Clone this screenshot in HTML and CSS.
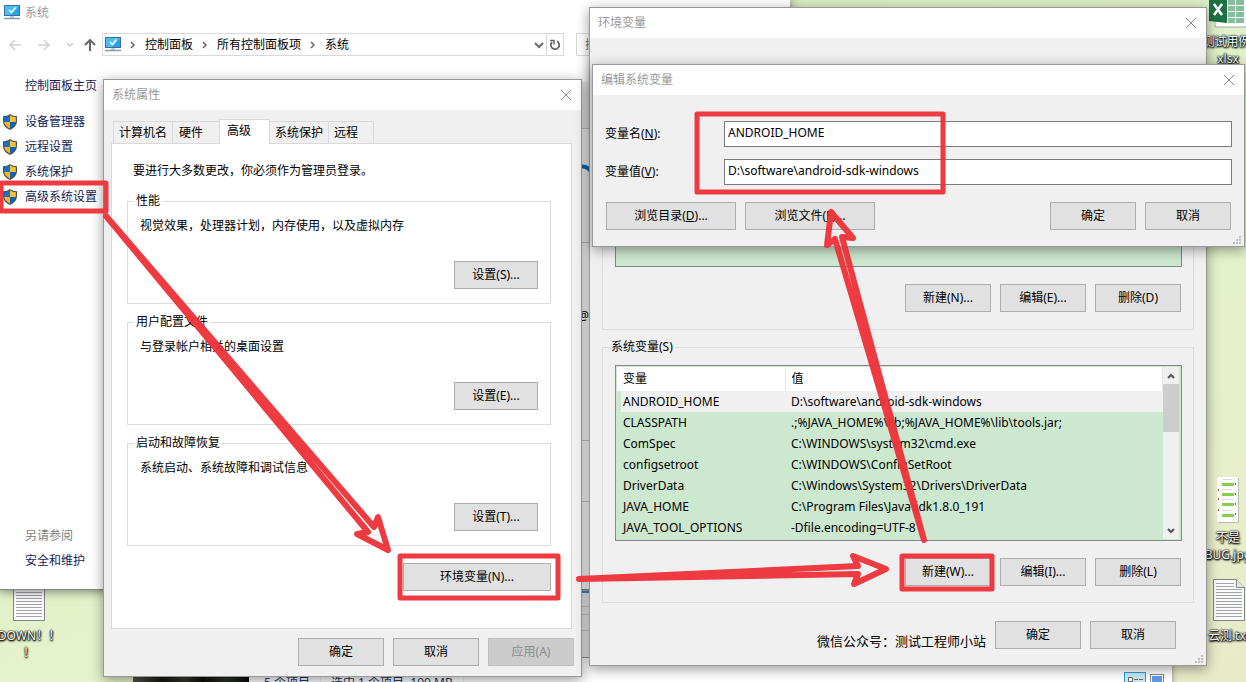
FILE: index.html
```html
<!DOCTYPE html>
<html lang="zh-CN">
<head>
<meta charset="utf-8">
<title>环境变量</title>
<link rel="stylesheet" href="styles.css">
</head>
<body>
<svg class="defs" aria-hidden="true">
  <symbol id="shield" viewBox="0 0 14 16">
    <path d="M7 0C5 1.500 2.500 2.200 0 2.200V7c0 4.200 3 7.200 7 9 4-1.800 7-4.800 7-9V2.200C11.500 2.200 9 1.500 7 0z" fill="#4b5358"/>
    <path d="M7 1.300V8H1.200V3.300C3.500 3.200 5.500 2.500 7 1.300z" fill="#1173cf"/>
    <path d="M7 1.300V8h5.800V3.300C10.500 3.200 8.500 2.500 7 1.300z" fill="#fbc02d"/>
    <path d="M1.200 8H7v6.700C3.800 13 1.500 11 1.200 8z" fill="#fbb51b"/>
    <path d="M12.800 8H7v6.700c3.200-1.700 5.500-3.700 5.800-6.700z" fill="#0d62b8"/>
  </symbol>
  <symbol id="monitor" viewBox="0 0 16 16">
    <rect x="0.500" y="0.500" width="15" height="10" fill="#27a3ee" stroke="#3d6f96"/>
    <path d="M1 1h14L7 10H1z" fill="#4bbcf7"/>
    <path d="M5 5l2.500 2.500L11.500 2.500" fill="none" stroke="#fff" stroke-width="1.600"/>
    <rect x="6" y="11" width="4" height="2" fill="#b9cfe0"/>
    <path d="M0 13.500h16" stroke="#7e99b0" stroke-width="1.500"/>
  </symbol>
  <symbol id="close" viewBox="0 0 12 12">
    <path d="M1 1l10 10M11 1L1 11" stroke="#8a8a8a" fill="none"/>
  </symbol>
  <symbol id="crumb" viewBox="0 0 6 8">
    <path d="M1 1l3 3-3 3" stroke="#666" stroke-width="1.500" fill="none"/>
  </symbol>
  <symbol id="grip" viewBox="0 0 8 8">
    <path d="M6 0h2v2H6zM3 3h2v2H3zM6 3h2v2H6zM0 6h2v2H0zM3 6h2v2H3zM6 6h2v2H6z" fill="#bfbfbf"/>
  </symbol>
  <symbol id="textfile" viewBox="0 0 32 42">
    <path d="M.5.5h23l8 8v33H.5z" fill="#fafafa" stroke="#7d858a"/>
    <path d="M23.500.5v8h8" fill="#e3e6e8" stroke="#7d858a"/>
    <path d="M3 4.500h18M3 7.500h18M3 10.500h26M3 13.500h26M3 16.500h26M3 19.500h26M3 22.500h26M3 25.500h26M3 28.500h26M3 31.500h26M3 34.500h26M3 37.500h26" stroke="#a3a5a8"/>
  </symbol>
</svg>

<main class="desktop">
  <figure class="shortcut shortcut-excel">
    <svg width="38" height="30" viewBox="0 0 38 30"><path d="M6 0h32v28H6z" fill="#fff" stroke="#a5aba6"/><path d="M19 1h7v5h-7zM27 1h8v5h-8zM19 7h7v5h-7zM27 7h8v5h-8zM19 13h7v5h-7zM27 13h8v5h-8zM19 19h7v5h-7zM27 19h8v5h-8z" fill="#85bd9f"/><path d="M0 0h18v24L0 22z" fill="#1e7145"/><path d="M5 5l8 11M13 5L5 16" stroke="#fff" stroke-width="2.600"/></svg>
    <figcaption>测试用例.<br>xlsx</figcaption>
  </figure>
  <figure class="shortcut shortcut-picture">
    <svg width="22" height="46" viewBox="0 0 22 46"><path d="M0 0h21v45H0z" fill="#fff"/><path d="M21.500 1v44.500H1" stroke="#b9bfae" fill="none"/><path d="M5 6h12v3H5zM5 16h12v3H5zM5 26h12v3H5zM5 37h12v3H5z" fill="#85cf4e"/><path d="M6 2.500h9M5 12.500h10M4 22.500h12M5 33.500h9" stroke="#d7dadc"/><path d="M18 6h1v2h-1zM1 12h1v2H1zM18 16h1v2h-1zM1 21h1v2H1zM18 26h1v2h-1zM1 32h1v2H1zM18 36h1v2h-1z" fill="#a05049"/></svg>
    <figcaption>不是<br>BUG.jpg</figcaption>
  </figure>
  <figure class="shortcut shortcut-text">
    <svg width="32" height="42"><use href="#textfile"/></svg>
    <figcaption>云测.txt</figcaption>
  </figure>
  <figure class="shortcut shortcut-down">
    <svg width="32" height="42"><use href="#textfile"/></svg>
    <figcaption>DOWN！！<br>！</figcaption>
  </figure>

  <div class="photo"></div>
  <section class="explorer">
    <footer class="status">
      <span>5 个项目</span>
      <span class="status-selected">选中 1 个项目&nbsp; 100 MB</span>
      <span class="status-views">
        <svg width="22" height="16" viewBox="0 0 22 16"><rect x=".5" y=".5" width="21" height="15" fill="#cbe8f6" stroke="#26a0da"/><path d="M4.500 5.500h4v4h-4z" fill="#fff" stroke="#666"/><path d="M10 7.500h4M15 7.500h4" stroke="#666"/></svg>
        <svg width="14" height="12" viewBox="0 0 14 12"><rect x=".5" y=".5" width="13" height="11" fill="#fff" stroke="#888"/><path d="M2 2h10v8H2z" fill="#5b9bea"/></svg>
      </span>
    </footer>
  </section>

  <section class="window system">
    <header class="system-title"><svg width="16" height="16"><use href="#monitor"/></svg><span>系统</span></header>
    <nav class="toolbar">
      <span class="history">
        <svg width="12" height="12" viewBox="0 0 12 12"><path d="M12 6H1M6 1L1 6l5 5" stroke="#d0d0d0" stroke-width="1.500" fill="none"/></svg>
        <svg width="12" height="12" viewBox="0 0 12 12"><path d="M0 6h11M6 1l5 5-5 5" stroke="#d0d0d0" stroke-width="1.500" fill="none"/></svg>
        <svg width="6" height="6" viewBox="0 0 6 6"><path d="M0 1l3 3 3-3" stroke="#ccc" stroke-width="1.500" fill="none"/></svg>
        <svg width="12" height="12" viewBox="0 0 12 12"><path d="M6 12V1M1 6l5-5 5 5" stroke="#666" stroke-width="2" fill="none"/></svg>
      </span>
      <div class="address">
        <svg width="16" height="16"><use href="#monitor"/></svg>
        <svg width="6" height="8"><use href="#crumb"/></svg>
        <a href="#">控制面板</a>
        <svg width="6" height="8"><use href="#crumb"/></svg>
        <a href="#">所有控制面板项</a>
        <svg width="6" height="8"><use href="#crumb"/></svg>
        <a href="#">系统</a>
        <svg class="address-drop" width="10" height="8" viewBox="0 0 10 8"><path d="M1 2l4 4 4-4" stroke="#666" stroke-width="2" fill="none"/></svg>
        <button class="refresh" aria-label="刷新"><svg width="12" height="12" viewBox="0 0 12 12"><path d="M8 2.200A4.200 4.200 0 1 1 3 3" stroke="#666" stroke-width="1.800" fill="none"/><path d="M1 1.500h4v4" stroke="#666" stroke-width="1.500" fill="none"/></svg></button>
      </div>
      <input class="search" type="search" aria-label="搜索" placeholder="搜索控制面板">
    </nav>
    <div class="system-content">
      <aside class="sidebar">
        <a href="#" class="home">控制面板主页</a>
        <a href="#"><svg width="14" height="16"><use href="#shield"/></svg>设备管理器</a>
        <a href="#"><svg width="14" height="16"><use href="#shield"/></svg>远程设置</a>
        <a href="#"><svg width="14" height="16"><use href="#shield"/></svg>系统保护</a>
        <a href="#"><svg width="14" height="16"><use href="#shield"/></svg>高级系统设置</a>
        <span class="see-also">另请参阅</span>
        <a href="#" class="security">安全和维护</a>
      </aside>
      <div class="info"><span class="info-top"></span><span class="info-logo"></span><span class="info-hardware">@</span><span class="info-name"></span><span class="info-group"></span></div>
    </div>
  </section>
  <div class="taskpane"><span></span><span></span><span></span></div>

  <section class="window dialog properties">
    <header class="titlebar"><span>系统属性</span><button class="close" aria-label="关闭"><svg width="12" height="12"><use href="#close"/></svg></button></header>
    <div class="properties-body">
      <div class="tabs" role="tablist">
        <button role="tab">计算机名</button><button role="tab">硬件</button><button role="tab" class="selected" aria-selected="true">高级</button><button role="tab">系统保护</button><button role="tab">远程</button>
      </div>
      <div class="pane">
        <p class="intro">要进行大多数更改，你必须作为管理员登录。</p>
        <fieldset class="group"><legend>性能</legend><p>视觉效果，处理器计划，内存使用，以及虚拟内存</p><button class="btn btn-settings">设置(S)...</button></fieldset>
        <fieldset class="group"><legend>用户配置文件</legend><p>与登录帐户相关的桌面设置</p><button class="btn btn-settings">设置(E)...</button></fieldset>
        <fieldset class="group"><legend>启动和故障恢复</legend><p>系统启动、系统故障和调试信息</p><button class="btn btn-settings">设置(T)...</button></fieldset>
        <button class="btn btn-environment">环境变量(N)...</button>
      </div>
      <div class="actions"><button class="btn">确定</button><button class="btn">取消</button><button class="btn" disabled>应用(A)</button></div>
    </div>
  </section>

  <section class="window dialog environment">
    <header class="titlebar"><span>环境变量</span><button class="close" aria-label="关闭"><svg width="12" height="12"><use href="#close"/></svg></button></header>
    <div class="environment-body">
      <div class="variables user-variables">
        <div class="list"></div>
        <div class="actions"><button class="btn">新建(N)...</button><button class="btn">编辑(E)...</button><button class="btn">删除(D)</button></div>
      </div>
      <fieldset class="variables">
        <legend>系统变量(S)</legend>
        <div class="list">
          <table>
            <thead><tr><th class="name">变量</th><th>值</th></tr></thead>
            <tbody>
              <tr class="current"><td>ANDROID_HOME</td><td>D:\software\android-sdk-windows</td></tr>
              <tr><td>CLASSPATH</td><td>.;%JAVA_HOME%\lib;%JAVA_HOME%\lib\tools.jar;</td></tr>
              <tr><td>ComSpec</td><td>C:\WINDOWS\system32\cmd.exe</td></tr>
              <tr><td>configsetroot</td><td>C:\WINDOWS\ConfigSetRoot</td></tr>
              <tr><td>DriverData</td><td>C:\Windows\System32\Drivers\DriverData</td></tr>
              <tr><td>JAVA_HOME</td><td>C:\Program Files\Java\jdk1.8.0_191</td></tr>
              <tr><td>JAVA_TOOL_OPTIONS</td><td>-Dfile.encoding=UTF-8</td></tr>
            </tbody>
          </table>
          <div class="scrollbar">
            <svg width="16" height="17" viewBox="0 0 16 17"><path d="M5 11l3-3 3 3" stroke="#555" stroke-width="2" fill="none"/></svg>
            <span class="thumb"></span>
            <svg width="16" height="17" viewBox="0 0 16 17"><path d="M5 7l3 3 3-3" stroke="#555" stroke-width="2" fill="none"/></svg>
          </div>
        </div>
        <div class="actions"><button class="btn">新建(W)...</button><button class="btn">编辑(I)...</button><button class="btn">删除(L)</button></div>
      </fieldset>
      <div class="actions environment-actions"><span class="credit">微信公众号：测试工程师小站</span><button class="btn">确定</button><button class="btn">取消</button></div>
    </div>
    <svg class="grip" width="8" height="8"><use href="#grip"/></svg>
  </section>

  <section class="window dialog edit">
    <header class="titlebar"><span>编辑系统变量</span><button class="close" aria-label="关闭"><svg width="12" height="12"><use href="#close"/></svg></button></header>
    <form class="edit-body">
      <div class="field"><label for="name">变量名(<u>N</u>):</label><input id="name" type="text" value="ANDROID_HOME"></div>
      <div class="field"><label for="value">变量值(<u>V</u>):</label><input id="value" type="text" value="D:\software\android-sdk-windows"></div>
      <div class="edit-actions">
        <button type="button" class="btn btn-browse">浏览目录(<u>D</u>)...</button><button type="button" class="btn btn-browse">浏览文件(<u>F</u>)...</button>
        <button type="button" class="btn btn-ok">确定</button><button type="button" class="btn">取消</button>
      </div>
    </form>
    <svg class="grip" width="8" height="8"><use href="#grip"/></svg>
  </section>

  <svg class="marks" aria-hidden="true">
    <g fill="none" stroke="#ee333a" stroke-width="5" stroke-linejoin="round" stroke-linecap="round">
      <rect x="1" y="183" width="105" height="28"/>
      <rect x="400" y="556" width="158" height="42"/>
      <rect x="697" y="114" width="246" height="78"/>
      <rect x="902" y="556" width="90" height="33"/>
      <g stroke-width="6">
        <path d="M106 216L368 532L357 534L388 550L378 517L374 527z"/>
        <path d="M579 579L858 566L853 556L886 569L854 584L858 574z"/>
        <path d="M924 540L842 237L853 238L831 212L827 245L835 239z"/>
      </g>
    </g>
  </svg>
</main>
</body>
</html>
```
FILE: styles.css
```css
* { box-sizing: border-box; }
body {
  margin: 0;
  overflow: hidden;
  font: 12px/16px "Noto Sans", "Noto Sans CJK SC", sans-serif;
  color: #000;
}
button, input { font: inherit; color: inherit; }
p, figure { margin: 0; }
a { color: inherit; text-decoration: none; }
svg { display: block; flex: none; }
.defs { position: absolute; width: 0; height: 0; }

.desktop {
  position: relative;
  height: 100vh;
  overflow: hidden;
  background: linear-gradient(160deg, #cfe3b8 0%, #dcefc4 30%, #e5f2cb 60%, #e9ebc8 100%);
}

/* Desktop shortcuts */
.shortcut {
  position: absolute;
  display: flex;
  flex-direction: column;
  align-items: center;
  gap: 6px;
  width: 76px;
  color: #fff;
  line-height: 17px;
  text-align: center;
  text-shadow: 0 0 1px #000, 0 0 2px #000, 1px 1px 2px #000, 0 1px 2px #000;
}
.shortcut-excel { left: 1190px; top: -1px; gap: 4px; }
.shortcut-picture { left: 1190px; top: 477px; }
.shortcut-text { left: 1191px; top: 579px; }
.shortcut-down { left: -9px; top: 579px; }

/* Windows behind the dialogs */
.photo {
  position: absolute;
  left: 133px;
  top: 660px;
  width: 116px;
  height: 40px;
  background: linear-gradient(90deg, #55564a, #171713 25%, #38352e 45%, #0d0d0c 60%, #2b3028 80%, #0b0d0b);
}
.explorer {
  position: absolute;
  left: 249px;
  right: 74px;
  top: 600px;
  height: 94px;
  display: flex;
  align-items: flex-end;
  background: #fff;
  box-shadow: 0 0 6px #0006;
}
.status {
  flex: 1;
  display: flex;
  align-items: flex-start;
  padding: 0 8px 0 15px;
  height: 22px;
  color: #1e395b;
}
.status > span { line-height: 22px; padding-right: 10px; border-right: 1px solid #eee; }
.status .status-selected { padding: 0 10px; }
.status .status-views { display: flex; align-items: center; gap: 4px; margin-left: auto; padding: 0; border: 0; }

.window { position: absolute; display: flex; flex-direction: column; }
.system {
  left: -1px;
  top: -1px;
  width: 791px;
  height: 591px;
  padding-left: 1px;
  background: #fff;
  border-bottom: 1px solid #8a8a8a;
  box-shadow: 0 1px 10px #0008;
}
.system-title { display: flex; align-items: center; gap: 5px; height: 27px; padding-left: 4px; color: #999; }
.toolbar { display: flex; align-items: center; margin-top: 7px; height: 23px; }
.history { display: flex; align-items: center; gap: 17px; width: 102px; padding-left: 9px; }
.history svg:nth-child(3) { margin-right: -6px; }
.address {
  display: flex;
  align-items: center;
  gap: 9px;
  width: 462px;
  height: 23px;
  padding-left: 2px;
  border: 1px solid #d9d9d9;
}
.address-drop { margin-left: auto; margin-right: -7px; }
.refresh {
  display: grid;
  place-items: center;
  width: 17px;
  height: 21px;
  padding: 0;
  background: none;
  border: 0;
  border-left: 1px solid #d9d9d9;
}
.search { width: 200px; height: 23px; margin: 0 0 0 12px; padding: 0 8px; border: 1px solid #d9d9d9; border-radius: 0; }
.system-content { flex: 1; display: flex; }
.sidebar {
  display: flex;
  flex-direction: column;
  gap: 9px;
  width: 180px;
  padding: 22px 0 20px 3px;
  color: #151c55;
}
.sidebar a { display: flex; gap: 8px; height: 16px; }
.sidebar .home { margin-bottom: 11px; padding-left: 22px; }
.sidebar .see-also { margin-top: auto; padding-left: 22px; color: #808080; }
.sidebar .security { padding-left: 22px; }
.info {
  width: 409px;
  margin-top: 26px;
  display: flex;
  flex-direction: column;
  align-items: flex-end;
  background: #fff;
}
.info span { width: 100%; border-bottom: 1px solid #ccc; text-align: right; }
.info .info-top { height: 47px; background: #f2f2f2; }
.info .info-logo { height: 114px; background: radial-gradient(circle at 402px 48px, transparent 8px, #0a72c4 9px, #0a72c4 12px, transparent 13px) 0 0 / 100% 44px no-repeat; }
.info .info-hardware { height: 198px; padding: 65px 0 0; }
.info .info-name { height: 61px; }
.info .info-group { border: 0; }
.taskpane {
  position: absolute;
  left: 570px;
  top: 591px;
  width: 40px;
  height: 67px;
  background: #eee;
  border-top: 2px solid #3488d8;
  border-bottom: 1px solid #999;
}
.taskpane span { display: block; height: 14px; border-bottom: 1px solid #ccc; }
.taskpane span + span { height: 8px; }
.taskpane span + span + span { height: 16px; }

/* Dialogs */
.dialog { background: #f0f0f0; border: 1px solid #999; box-shadow: 0 3px 12px #0006; }
.titlebar {
  display: flex;
  align-items: center;
  justify-content: space-between;
  height: 30px;
  padding: 0 9px 0 8px;
  background: #fff;
  color: #999;
}
.close { display: grid; place-items: center; padding: 0; background: none; border: 0; }
.btn {
  width: 86px;
  height: 28px;
  padding: 0;
  background: #e1e1e1;
  border: 1px solid #adadad;
  border-radius: 0;
}
.btn:disabled { background: #ccc; border-color: #bfbfbf; color: #8b8b8b; }
.actions { display: flex; justify-content: flex-end; align-items: center; gap: 9px; }
.grip { position: absolute; right: 3px; bottom: 2px; }

.properties { left: 103px; top: 79px; width: 479px; }
.properties-body { padding: 9px 7px 10px; }
.tabs { display: flex; align-items: flex-end; padding-left: 2px; }
.tabs button {
  height: 22px;
  padding: 0 5px;
  background: #f0f0f0;
  border: 1px solid #d9d9d9;
  border-bottom: 0;
  margin-right: -1px;
}
.tabs button:nth-child(2) { padding: 0 16px 0 6px; }
.tabs .selected { z-index: 1; height: 25px; margin: 0 -1px -1px 0; padding: 0 18px 3px 7px; background: #fff; }
.tabs button:last-child { padding: 0 15px 0 5px; }
.pane {
  display: flex;
  flex-direction: column;
  height: 486px;
  margin-right: 2px;
  padding: 19px 20px 0 15px;
  background: #fff;
  border: 1px solid #d9d9d9;
}
.intro { padding-left: 6px; margin-bottom: 14px; }
.group {
  display: flex;
  flex-direction: column;
  height: 111px;
  min-width: 0;
  margin: 0 0 10px;
  padding: 9px 12px 14px;
  border: 1px solid #dcdcdc;
}
.group legend { margin-left: -6px; padding: 0 2px; }
.btn-settings { width: 84px; margin: 27px 0 0 auto; }
.btn-environment { width: 148px; margin: 7px 0 0 auto; }
.properties-body > .actions { padding-top: 9px; }

.environment { left: 589px; top: 7px; width: 618px; }
.environment-body { padding: 34px 12px 16px; }
.variables { min-width: 0; margin: 0 0 9px; padding: 10px 11px 16px 12px; border: 1px solid #dcdcdc; }
.variables legend { margin-left: -6px; padding: 0 2px; }
.variables .actions { margin-top: 17px; padding-right: 1px; }
.list {
  display: flex;
  height: 176px;
  padding: 1px;
  background: #cce8cf;
  border: 1px solid #828790;
}
.user-variables { padding-bottom: 17px; }
.user-variables .list { height: 184px; }
.list table { flex: 1; border-collapse: collapse; table-layout: fixed; }
.list th { height: 24px; padding: 0 6px; background: #fff; font-weight: 400; text-align: left; border-right: 1px solid #e5e5e5; }
.list .name { width: 168px; }
.list td { height: 21px; padding: 0 6px; line-height: 20px; white-space: nowrap; }
.list .current td { background: #f0f0f0; }
.list .current td:first-child { background: linear-gradient(90deg, #cce8cf 4px, #f0f0f0 4px); }
.scrollbar { display: flex; flex-direction: column; width: 17px; background: #f0f0f0; border-right: 1px solid #cce8cf; }
.thumb { height: 48px; margin-bottom: auto; background: #cdcdcd; }
.environment-actions { margin-top: 18px; padding-right: 18px; }
.credit { margin-top: 12px; font-size: 13px; }

.edit { left: 592px; top: 64px; width: 653px; }
.edit-body { display: flex; flex-direction: column; gap: 12px; padding: 26px 12px 16px; }
.field { display: flex; align-items: center; }
.field label { width: 119px; }
.field input {
  flex: 1;
  min-width: 0;
  height: 26px;
  margin: 0;
  padding: 0 3px 3px;
  background: #fff;
  border: 1px solid #7a7a7a;
  border-radius: 0;
}
.edit-actions { display: flex; gap: 9px; margin-top: 5px; padding: 0 1px; }
.btn-browse { width: 130px; }
.btn-ok { margin-left: auto; }

.marks { position: absolute; inset: 0; width: 100%; height: 100%; pointer-events: none; opacity: .96; }
```
